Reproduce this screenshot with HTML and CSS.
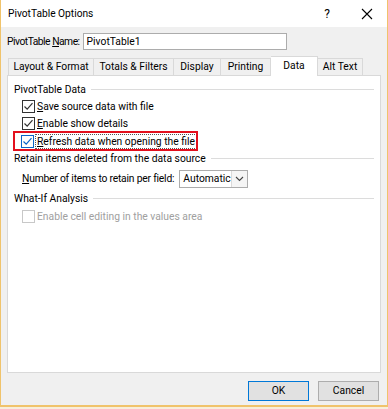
FILE: index.html
```html
<!DOCTYPE html>
<html>
<head>
<meta charset="utf-8">
<link rel="stylesheet" href="styles.css">
</head>
<body>
<div class="window">
  <div class="titlebar">
    <span class="title">PivotTable Options</span>
    <span class="help">?</span>
    <span class="close"><svg width="12" height="12" viewBox="0 0 12 12"><path d="M1 1 L11 11 M11 1 L1 11" stroke="#000" stroke-width="1.1"/></svg></span>
  </div>
  <div class="content">
    <div class="namerow">
      <span class="label">PivotTable <u>N</u>ame:</span>
      <div class="input">PivotTable1</div>
    </div>
    <div class="tabs">
      <div class="tab t1">Layout &amp; Format</div>
      <div class="tab t2">Totals &amp; Filters</div>
      <div class="tab t3">Display</div>
      <div class="tab t4">Printing</div>
      <div class="tab t5 active">Data</div>
      <div class="tab t6">Alt Text</div>
    </div>
    <div class="panel">
      <div class="group">PivotTable Data<span class="rule"></span></div>
      <div class="check-row">
        <span class="box"><svg width="11" height="11" viewBox="0 0 11 11"><path d="M1.5 5.5 L4.2 8.2 L9.5 2.2" fill="none" stroke="#333" stroke-width="1.2"/></svg></span>
        <span><u>S</u>ave source data with file</span>
      </div>
      <div class="check-row">
        <span class="box"><svg width="11" height="11" viewBox="0 0 11 11"><path d="M1.5 5.5 L4.2 8.2 L9.5 2.2" fill="none" stroke="#333" stroke-width="1.2"/></svg></span>
        <span><u>E</u>nable show details</span>
      </div>
      <div class="check-row highlight">
        <span class="box hover"><svg width="11" height="11" viewBox="0 0 11 11"><path d="M1.5 5.5 L4.2 8.2 L9.5 2.2" fill="none" stroke="#0a64c8" stroke-width="1.2"/></svg></span>
        <span class="focus"><u>R</u>efresh data when opening the file</span>
      </div>
      <div class="group">Retain items deleted from the data source<span class="rule"></span></div>
      <div class="select-row">
        <span class="sel-label"><u>N</u>umber of items to retain per field:</span>
        <div class="select">
          <span class="sel-text">Automatic</span>
          <span class="sel-arrow"><svg width="9" height="6" viewBox="0 0 9 6"><path d="M1 1 L4.5 4.5 L8 1" fill="none" stroke="#444" stroke-width="1.1"/></svg></span>
        </div>
      </div>
      <div class="group">What-If Analysis<span class="rule"></span></div>
      <div class="check-row disabled">
        <span class="box dis"></span>
        <span>Enable cell editing in the values area</span>
      </div>
    </div>
    <div class="buttons">
      <div class="btn default">OK</div>
      <div class="btn">Cancel</div>
    </div>
  </div>
</div>
</body>
</html>
```
FILE: styles.css
```css
html, body {
  margin: 0;
  padding: 0;
  background: #f8eedb;
}
body {
  font-family: Roboto, "Noto Sans", sans-serif;
  font-size: 10.3px;
  color: #000;
  width: 388px;
  height: 409px;
  overflow: hidden;
  white-space: nowrap;
}
.window {
  width: 386px;
  height: 405px;
  border: 1px solid #f0c36b;
  border-bottom-width: 2px;
  border-top: none;
  background: #f0f0f0;
  display: flex;
  flex-direction: column;
}
.titlebar {
  height: 27px;
  background: #fff;
  display: flex;
  align-items: center;
  padding-left: 7px;
  flex: none;
}
.title {
  font-size: 10.2px;
  flex: 1;
}
.help {
  font-size: 12px;
  margin-right: 31px;
}
.close {
  display: flex;
  margin-right: 14px;
}
.content {
  flex: 1;
  display: flex;
  flex-direction: column;
  padding: 6px 5px 0 6px;
}
.namerow {
  display: flex;
  align-items: center;
  height: 16px;
}
.label {
  flex: none;
  letter-spacing: -0.5px;
  margin-right: 3px;
}
.input {
  flex: none;
  width: 199px;
  height: 15px;
  border: 1px solid #acacac;
  background: #fff;
  padding-left: 3px;
  line-height: 15px;
}
.tabs {
  display: flex;
  margin-top: 8px;
  padding-left: 1px;
  height: 18px;
  align-items: flex-end;
}
.tab {
  height: 16px;
  border: 1px solid #d9d9d9;
  border-bottom: none;
  border-left: none;
  background: #f0f0f0;
  text-align: center;
  line-height: 16px;
  box-sizing: content-box;
}
.t1 { width: 84px; border-left: 1px solid #d9d9d9; }
.t2 { width: 79px; }
.t3 { width: 46px; }
.t4 { width: 49px; }
.t5 { width: 46px; }
.t6 { width: 44px; }
.tab.active {
  background: #fff;
  height: 19px;
  line-height: 17px;
  margin-bottom: -1px;
  position: relative;
  z-index: 1;
}
.panel {
  background: #fff;
  border: 1px solid #d9d9d9;
  height: 298px;
  width: 374px;
  padding: 5px 0 0 6px;
  box-sizing: border-box;
}
.group {
  display: flex;
  align-items: center;
  height: 17px;
  margin-right: 6px;
}
.rule {
  flex: 1;
  height: 1px;
  background: #dcdcdc;
  margin-left: 5px;
}
.check-row {
  display: flex;
  align-items: center;
  height: 17px;
  margin-left: 8px;
}
.box {
  width: 11px;
  height: 11px;
  border: 1px solid #333;
  background: #fff;
  margin-right: 2px;
  display: flex;
  flex: none;
}
.box.hover { border-color: #0a64c8; }
.box.dis { border-color: #c8c8c8; }
.highlight {
  outline: 2px solid #e3101d;
  outline-offset: 0;
  margin-left: 1px;
  padding-left: 6px;
  width: 175px;
  height: 16px;
  margin-top: 1px;
  margin-bottom: 1px;
}
.focus {
  outline: 1px dotted #555;
  outline-offset: 0;
  line-height: 13px;
  padding: 0 1px;
}
.disabled {
  color: #a0a0a0;
  margin-top: 1px;
}
.select-row {
  display: flex;
  align-items: center;
  height: 23px;
  margin-left: 8px;
}
.sel-label {
  letter-spacing: -0.2px;
}
.select {
  display: flex;
  margin-left: 5px;
  width: 67px;
  height: 16px;
  border: 1px solid #acacac;
  background: #fff;
}
.sel-text {
  flex: 1;
  padding-left: 3px;
  line-height: 16px;
}
.sel-arrow {
  width: 16px;
  border-left: 1px solid #dadada;
  background: #f5f5f5;
  display: flex;
  align-items: center;
  justify-content: center;
}
.buttons {
  display: flex;
  justify-content: flex-end;
  gap: 9px;
  margin-top: 8px;
  padding-right: 3px;
}
.btn {
  width: 59px;
  height: 18px;
  border: 1px solid #adadad;
  background: #e1e1e1;
  text-align: center;
  line-height: 18px;
}
.btn.default {
  border-color: #0078d7;
}
```
